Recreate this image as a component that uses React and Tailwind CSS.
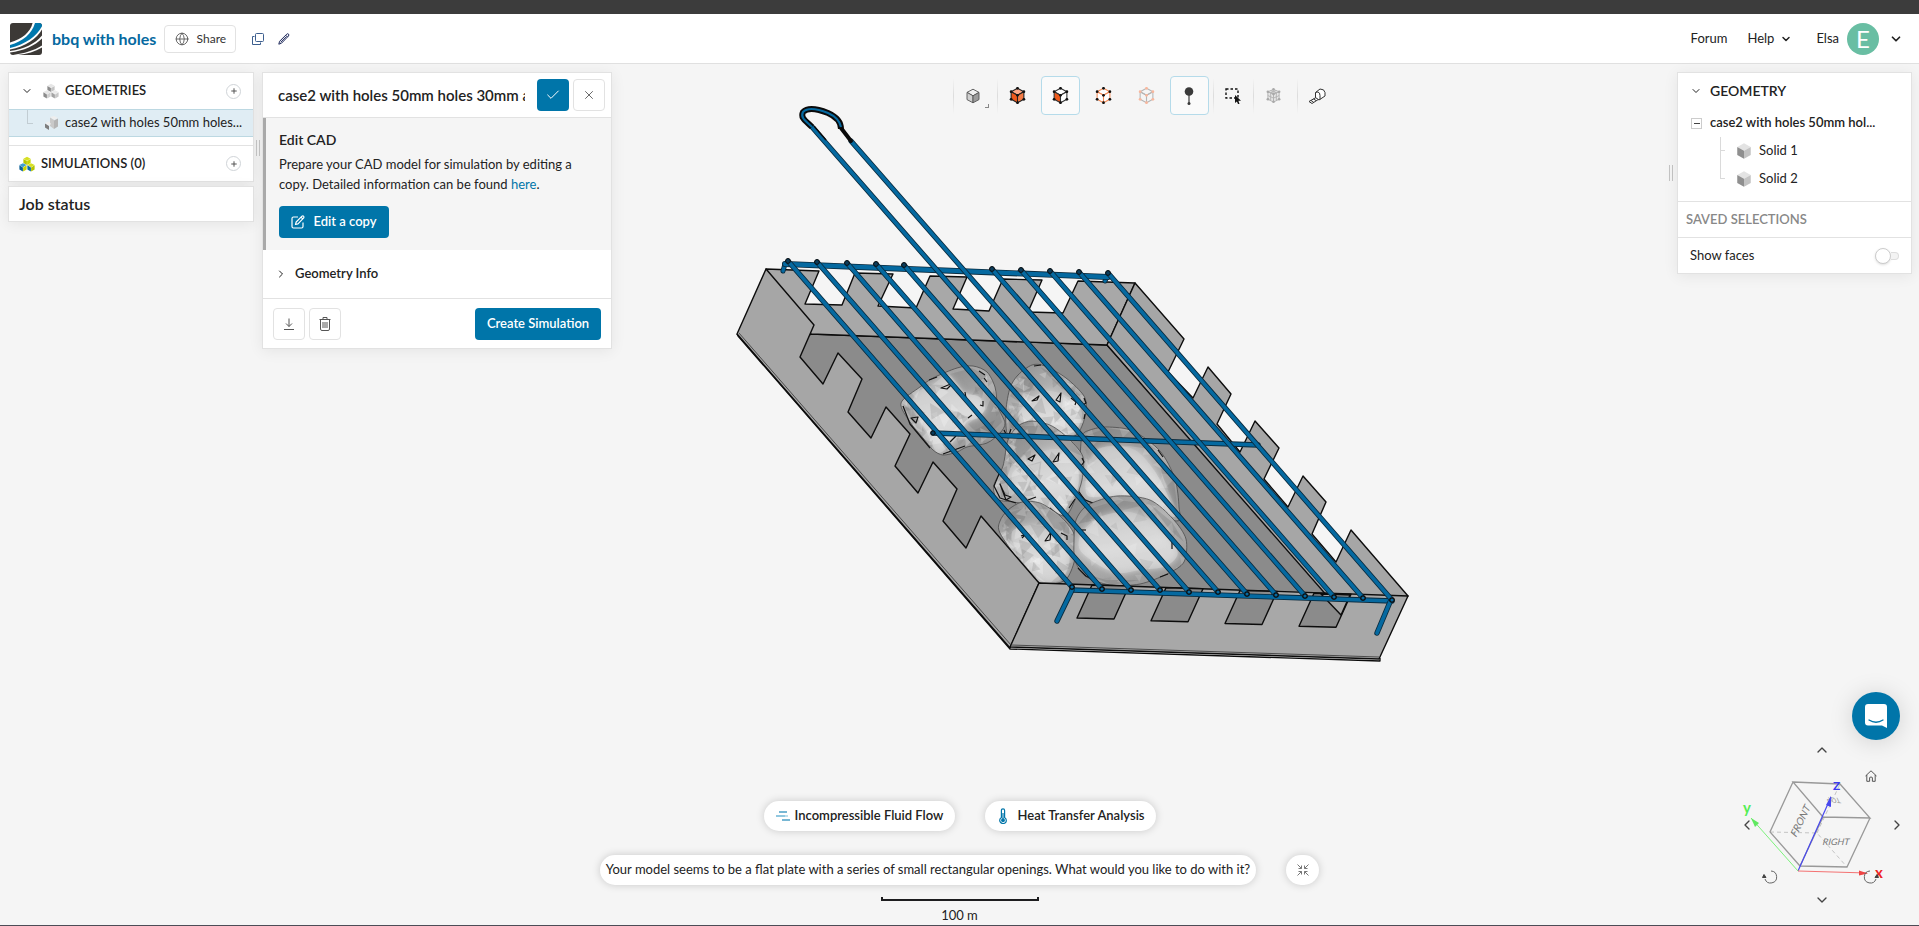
import React from "react";
import { Check, X, ChevronDown, ChevronRight, ChevronUp, ChevronLeft, Globe, Plus } from "lucide-react";

/* ---------- small isometric cube icons ---------- */

function Cube({ className, top = "#e3e3e3", left = "#8f8f8f", right = "#c3c3c3", stroke = "none", dots, strokeWidth = 1 }) {
  const pts = [[8, 1.2], [14, 4.4], [14, 11.6], [8, 14.8], [2, 11.6], [2, 4.4], [8, 7.8]];
  return (
    <svg viewBox="0 0 16 16" className={className} aria-hidden="true">
      <g stroke={stroke} strokeWidth={strokeWidth} strokeLinejoin="round">
        <path d="M8 1.2 14 4.4 8 7.8 2 4.4Z" fill={top} />
        <path d="M2 4.4 8 7.8V14.8L2 11.6Z" fill={left} />
        <path d="M14 4.4 8 7.8V14.8L14 11.6Z" fill={right} />
      </g>
      {dots && pts.map(([x, y]) => <circle key={`${x}-${y}`} cx={x} cy={y} r="1.3" fill={dots} />)}
    </svg>
  );
}

const grays = [["#e6e6e6", "#8c8c8c", "#c4c4c4"], ["#e6e6e6", "#8c8c8c", "#cfcfcf"], ["#ececec", "#a4a4a4", "#c8c8c8"]];
const brights = [["#d7e021", "#b4c400", "#c8d400"], ["#3c9fd0", "#0a5f96", "#c8d400"], ["#d7e021", "#0a6ba5", "#b4c400"]];

function Cluster({ className, colors }) {
  const at = [[4, 0], [0, 6.4], [8, 6.4]];
  return (
    <svg viewBox="0 0 16 16" className={className} aria-hidden="true">
      {at.map(([x, y], i) => (
        <g key={i} transform={`translate(${x} ${y})`}>
          <path d="M4 .8 7.6 2.7 4 4.8.4 2.7Z" fill={colors[i][0]} />
          <path d="M.4 2.9 3.9 5v4L.4 7Z" fill={colors[i][1]} />
          <path d="M7.6 2.9 4.1 5v4L7.6 7Z" fill={colors[i][2]} />
        </g>
      ))}
    </svg>
  );
}

function Logo() {
  return (
    <svg viewBox="0 0 32 32" className="size-8 shrink-0" aria-hidden="true">
      <rect width="32" height="32" rx="3" fill="#3c3936" />
      <path d="M24.5 0H29a3 3 0 0 1 3 3v.6C27.500 13.500 16 22 0 25.800V21.200C13 17.500 21.500 10.500 24.500 0Z" fill="#0078ad" />
      <path d="M22.600 0H25C21.800 11 13 18.300 0 22V19.600C12.400 15.800 20.200 9.400 22.600 0Z" fill="#fff" />
      <path d="M32 3.200V6.500C27 15.500 15.500 23.500 0 26.600V25C15.500 21.300 27 13 32 3.200Z" fill="#fff" />
      <path d="M32 12.500V15.600C25 22.800 14 27.800 0 29.600V28.100C14 25.900 25 21 32 12.500Z" fill="#fff" />
      <path d="M32 22.500V24.500C25 28.600 17 31 8 32H3C14 30.500 24 27.500 32 22.500Z" fill="#fff" />
    </svg>
  );
}

/* ---------- 3D model ---------- */

function smooth(points) {
  const n = points.length;
  let d = `M${points[0][0]} ${points[0][1]}`;
  for (let i = 0; i < n; i++) {
    const [a, b, c, e] = [points[(i - 1 + n) % n], points[i], points[(i + 1) % n], points[(i + 2) % n]];
    const k = 7;
    d += `C${b[0] + (c[0] - a[0]) / k} ${b[1] + (c[1] - a[1]) / k} ${c[0] - (e[0] - b[0]) / k} ${c[1] - (e[1] - b[1]) / k} ${c[0]} ${c[1]}`;
  }
  return d + "Z";
}

/* deterministic small triangles that give a surface its faceted look */
function facets(outline, seed, count) {
  let s = seed;
  const rnd = () => (s = (s * 16807) % 2147483647) / 2147483647;
  const xs = outline.map((p) => p[0]);
  const ys = outline.map((p) => p[1]);
  const [x0, x1, y0, y1] = [Math.min(...xs), Math.max(...xs), Math.min(...ys), Math.max(...ys)];
  return Array.from({ length: count }, () => {
    const x = x0 + rnd() * (x1 - x0);
    const y = y0 + rnd() * (y1 - y0);
    const r = 4 + rnd() * 7;
    const t = rnd() * 6.28;
    const pt = (a, k) => `${(x + Math.cos(t + a) * r * k).toFixed(1)} ${(y + Math.sin(t + a) * r * k).toFixed(1)}`;
    return { d: `M${pt(0, 1)} ${pt(2, 0.9)} ${pt(4.1, 0.7)}Z`, fill: rnd() > 0.45 ? "#ffffff" : "#777777" };
  });
}

const pieces = [
  {
    outline: [[901, 403], [920, 387], [933, 378], [957, 368], [973, 366], [987, 372], [995, 387], [998, 407], [1005, 423], [1000, 433], [987, 443], [967, 447], [957, 452], [943, 455], [933, 450], [923, 438], [910, 422]],
    lit: [[932, 385], [948, 375], [963, 393], [978, 396], [985, 408], [978, 418], [967, 422], [955, 440], [938, 453], [927, 432], [912, 407], [918, 392]],
    shades: ["M950 374l22-6 14 8-4 22-18-6z", "M968 424l18-14 8-20 8 32-18 18z", "M903 404l10 4 12 24-8-4z", "M975 430l20-10-8 18z"],
    marks: ["M941 388l12-5-6 6z", "M929 380l8-3 M979 371l6 4 M984 378l3 4", "M965 392l1 6", "M983 401v5l-3-1 M968 418l4-3", "M911 418l7-1-2 6z", "M903 406l7 18 20 24", "M950 442l6-6", "M943 454l22-8"],
  },
  {
    outline: [[1007, 433], [1006, 410], [1010, 388], [1018, 375], [1032, 365], [1045, 366], [1066, 378], [1084, 396], [1086, 412], [1080, 430], [1070, 438], [1040, 440], [1016, 436]],
    lit: [[1030, 400], [1045, 391], [1062, 394], [1078, 404], [1082, 416], [1076, 430], [1060, 436], [1040, 428], [1020, 420], [1020, 408]],
    shades: ["M1010 396l12-20 14 6-14 22z", "M1040 367l20 10 22 20-20-8z", "M1008 414l10-8 4 14-12 12z"],
    marks: ["M1032 401l7-5-2 4z", "M1056 400l5-7-1 9z", "M1071 398l5 4-1 3", "M1084 398l2 5-3 2", "M1085 414l-1 5", "M1034 366l7-1", "M1004 430l4 8 3-9"],
  },
  {
    outline: [[1082, 436], [1090, 430], [1107, 427], [1133, 431], [1160, 451], [1175, 479], [1179, 507], [1177, 521], [1137, 510], [1090, 502], [1078, 487], [1080, 460]],
    lit: [[1086, 478], [1092, 454], [1110, 446], [1135, 450], [1154, 470], [1168, 496], [1174, 517], [1137, 498], [1110, 496], [1088, 496]],
    shades: ["M1085 436l22-8 26 4 24 18-28-4-38 2z", "M1156 452l18 28 4 34-14-34z"],
    marks: ["M1158 450l5 7", "M1079 492l6 8 8 3"],
    smoothness: 10,
  },
  {
    outline: [[997, 499], [994, 485], [1003, 466], [1008, 440], [1018, 426], [1032, 421], [1052, 426], [1070, 440], [1083, 457], [1082, 480], [1075, 500], [1065, 516], [1045, 507], [1013, 502]],
    lit: [[1015, 470], [1042, 452], [1062, 450], [1077, 464], [1078, 487], [1068, 504], [1062, 515], [1040, 504], [1018, 492], [1012, 482]],
    shades: ["M1008 446l14-20 16 0-8 22-20 20z", "M1046 426l26 16 10 14-18-8z", "M999 470l8-4 2 28-8 4z"],
    marks: ["M1028 459l7-4-3 6z", "M1053 462l6-9-1 8z", "M1082 458l2 4-3 4", "M999 474l-5 12 6 12 16 5", "M1000 484l5 11 6 2-5 3z", "M1028 500l8-3", "M1069 508l6-9", "M1050 508l10 10"],
  },
  {
    outline: [[1000, 533], [1000, 521], [1008, 510], [1022, 502], [1040, 503], [1060, 516], [1074, 534], [1075, 558], [1068, 577], [1058, 583], [1040, 583], [1020, 562]],
    lit: [[1012, 532], [1036, 525], [1058, 537], [1069, 552], [1068, 568], [1060, 580], [1042, 581], [1020, 558]],
    shades: ["M1002 526l10-14 18-6-6 14-14 14z", "M1040 504l22 14 12 18-20-8z"],
    marks: ["M1021 536l5-2-4 4", "M1045 541l6-9-1 8z", "M1061 533l6 3 0 4", "M1075 535v6 M1075 551v6"],
  },
  {
    outline: [[1074, 540], [1076, 520], [1088, 505], [1117, 496], [1150, 500], [1173, 519], [1186, 539], [1184, 562], [1167, 574], [1140, 584], [1110, 585], [1085, 576], [1075, 560]],
    lit: [[1082, 532], [1102, 516], [1130, 512], [1156, 524], [1176, 548], [1176, 558], [1164, 567], [1140, 570], [1120, 573], [1100, 566], [1080, 550]],
    shades: ["M1078 524l14-16 26-8 30 4-24 6-30 10z", "M1150 504l22 18 12 20-14-12z", "M1086 574l20 6 34 0-28 5z"],
    marks: ["M1172 542v7", "M1078 568l8 8 6 3", "M1080 530h6", "M1160 577l8-3"],
    smoothness: 12,
  },
];

const floorY = (x) => 585 + (x - 1092) * 0.037;

const bars = [
  [788, 261, 1072, 587], [817, 262, 1102, 589], [847, 263, 1131, 590], [876, 264, 1160, 590],
  [904, 265, 1189, 592], [812, 127, 1218, 592], [851, 141, 1247, 594], [992, 269, 1276, 595],
  [1021, 270, 1305, 596], [1050, 271, 1334, 597], [1079, 272, 1363, 598], [1108, 273, 1392, 600],
];

function Rod({ d, w = 5 }) {
  return (
    <g fill="none" strokeLinecap="round" strokeLinejoin="round">
      <path d={d} stroke="#0a2a3d" strokeWidth={w} />
      <path d={d} stroke="#0569a0" strokeWidth={w - 1.7} />
    </g>
  );
}

function Model() {
  return (
    <svg viewBox="0 64 1919 861" preserveAspectRatio="xMidYMid meet" className="absolute inset-0 h-full w-full" role="img" aria-label="Barbecue model with grill">
      <defs>
        <linearGradient id="dark" x1="0" y1="0" x2="0.6" y2="1">
          <stop offset="0" stopColor="#8c8c8c" />
          <stop offset="0.5" stopColor="#b4b4b4" />
          <stop offset="1" stopColor="#999999" />
        </linearGradient>
        <linearGradient id="light" x1="0.2" y1="0" x2="0.5" y2="1">
          <stop offset="0" stopColor="#c8c8c8" />
          <stop offset="0.6" stopColor="#dcdcdc" />
          <stop offset="1" stopColor="#d2d2d2" />
        </linearGradient>
        <filter id="blend" x="-20%" y="-20%" width="140%" height="140%"><feGaussianBlur stdDeviation="3" /></filter>
        <filter id="soften"><feGaussianBlur stdDeviation="0.7" /></filter>
        {pieces.map((p, i) => <clipPath key={i} id={`piece${i}`}><path d={smooth(p.outline)} /></clipPath>)}
      </defs>

      <g stroke="#0c0c0c" strokeWidth="1.4" strokeLinejoin="round">
        <path d="M811 334 1107 345 1350 615 1039 590 960 560 790 350Z" fill="#8b8b8b" />
        <path d="M766 269 819 271 805 304 842 305 855 273 893 274 878 306 916 308 930 276 967 277 953 309 989 311 1003 279 1042 280 1028 312 1063 313 1078 281 1135 283 1107 345 811 334Z" fill="#a8a8a8" />
        <path d="M1135 283 1184 339 1168 372 1193 398 1208 367 1231 394 1217 424 1240 452 1255 421 1279 448 1264 479 1288 507 1303 476 1326 502 1312 534 1336 562 1351 530 1408 596 1350 622 1107 345Z" fill="#a6a6a6" />
      </g>

      {pieces.map((p, i) => (
        <g key={i} strokeLinejoin="round">
          <g clipPath={`url(#piece${i})`}>
            <path d={smooth(p.outline)} fill="url(#dark)" />
            {p.shades.map((d) => <path key={d} d={d} fill="#666" opacity="0.25" filter="url(#soften)" />)}
            <path d={smooth(p.lit)} fill="url(#light)" filter="url(#blend)" />
            <path d={smooth(p.lit)} fill="url(#light)" opacity="0.6" filter="url(#soften)" />
            <g filter="url(#soften)">
              {facets(p.outline, 41 + i * 97, p.smoothness ? 26 : 60).map((f) => (
                <path key={f.d} d={f.d} fill={f.fill} opacity={p.smoothness ? 0.14 : 0.22} />
              ))}
            </g>
          </g>
          <path d={smooth(p.outline)} fill="none" stroke="#4e4e4e" strokeWidth="0.8" />
          {p.marks.map((d) => <path key={d} d={d} fill="none" stroke="#111" strokeWidth="1.2" />)}
        </g>
      ))}

      <g stroke="#0c0c0c" strokeWidth="1.4" strokeLinejoin="round">
        <path d="M766 269 737 334 1010 648 1039 583 981 516 966 548 943 521 957 489 933 462 918 493 895 466 910 434 886 407 871 438 848 412 862 379 838 353 823 384 800 357 814 325Z" fill="#a6a6a6" />
        <path d="M1039 583 1408 596 1379 659 1010 647Z" fill="#a8a8a8" />
        <path d="M737 334 738 336 1010 649 1380 661 1380 658" fill="none" strokeWidth="1.3" />
        <path d="M739 333 1011 645 1379 657" fill="none" stroke="#333" strokeWidth="0.8" />
        {[1092, 1166, 1240, 1314].map((x) => (
          <path key={x} d={`M${x} ${floorY(x)}l-15 33 37 1 15-33Z`} fill="#8b8b8b" />
        ))}
        <path d="M1321 594 1341 615 1350 595Z" fill="#a6a6a6" />
      </g>

      <Rod d="M785 264 783 271" />
      <Rod d="M1107 276 1105 281" />
      <Rod d="M785 264 1108 277" w={6} />
      <Rod d="M933 433 1258 445" w={5.4} />
      <Rod d="M1072 590 1392 601" w={5.4} />
      <Rod d="M1072 590 1057 621" w={5.4} />
      <Rod d="M1390 602 1377 633" w={5.4} />
      {bars.map(([x1, y1, x2, y2]) => (
        <g key={x2}>
          <Rod d={`M${x1} ${y1} ${x2} ${y2}`} w={5.2} />
          <circle cx={x2} cy={y2} r="2.200" fill="#0569a0" stroke="#0c0c0c" strokeWidth="1.200" />
          {y1 > 200 && <circle cx={x1} cy={y1} r="2.400" fill="#0b3d5c" stroke="#0c0c0c" strokeWidth="1" />}
        </g>
      ))}
      <circle cx="933" cy="433" r="2.200" fill="#0b3d5c" stroke="#0c0c0c" />
      <path d="M812 127C806 121 800 118 803 112 808 107 818 109 828 113 837 117 841 123 841 129" fill="none" stroke="#0a0a0a" strokeWidth="6" strokeLinejoin="round" />
      <path d="M841 128 851 141" fill="none" stroke="#0a0a0a" strokeWidth="4" strokeLinecap="round" />
      <path d="M812 127C806 121 800 118 803 112 808 107 818 109 828 113 837 117 840 122 841 127" fill="none" stroke="#0569a0" strokeWidth="2.200" />
      <path d="M814 126 826 140" stroke="#0a0a0a" strokeWidth="1.500" />
    </svg>
  );
}

/* ---------- header ---------- */

function Header() {
  return (
    <header className="flex h-[50px] items-center border-b border-[#e0e0e0] bg-white pr-4 pl-2.5">
      <Logo />
      <h1 className="ml-2.5 text-base font-bold text-[#0569a0]">bbq with holes</h1>
      <button type="button" className="ml-2 flex h-7 w-18 items-center justify-center gap-2 rounded border border-[#e2e2e2] text-xs text-[#333]">
        <Globe className="size-3.5 text-[#555]" strokeWidth={1.5} />
        Share
      </button>
      <button type="button" aria-label="Duplicate project" className="ml-4 text-[#3d5f8f]">
        <svg viewBox="0 0 12 12" className="size-3" fill="none" stroke="currentColor"><rect x="3.500" y=".5" width="8" height="8" rx="1" /><path d="M2.500 3.500H.5v8h8V9.500" /></svg>
      </button>
      <button type="button" aria-label="Rename project" className="ml-3.5 text-[#1f2a5c]">
        <svg viewBox="0 0 12 12" className="size-3" fill="none" stroke="currentColor" strokeLinejoin="round"><path d="M.8 11.200 1.600 8.300 8.800 1.100q1-.8 1.700 0t0 1.900L3.500 10.200ZM7.700 2.200 9.600 4.100M2.600 9.300 8.300 3.600" /></svg>
      </button>
      <nav className="ml-auto flex items-center text-[13px] text-[#222]">
        <a href="#forum">Forum</a>
        <button type="button" className="ml-5 flex items-center gap-1.5">Help <ChevronDown className="size-3" strokeWidth={3} /></button>
        <button type="button" className="ml-6 flex items-center gap-2">
          <span>Elsa</span>
          <span className="flex size-8 items-center justify-center rounded-full bg-[#69bea3] text-2xl text-white">E</span>
          <ChevronDown className="ml-0.5 size-3.5" strokeWidth={3} />
        </button>
      </nav>
    </header>
  );
}

/* ---------- left tree ---------- */

const card = "border border-[#e2e2e2] bg-white shadow-[0_2px_14px_rgba(0,0,0,0.07)]";

function AddButton({ label }) {
  return (
    <button type="button" aria-label={label} className="ml-auto flex size-[15px] items-center justify-center rounded-full border border-[#d0d4d8] bg-white text-[#555]">
      <Plus className="size-2" strokeWidth={3} />
    </button>
  );
}

function Grip() {
  return <div className="h-4 w-1 border-x border-[#c4c4c4]" />;
}

function Tree() {
  return (
    <aside className="flex w-[246px] shrink-0 flex-col gap-1 text-[13px] text-[#222]">
      <div className={card}>
        <div className="flex h-9 items-center pr-3 pl-3">
          <ChevronDown className="size-3" strokeWidth={2} />
          <Cluster className="ml-2.5 size-4" colors={grays} />
          <span className="ml-1.5 font-semibold">GEOMETRIES</span>
          <AddButton label="Add geometry" />
        </div>
        <div className="flex h-7 items-center border-y border-[#bcd8e2] bg-[#e0edf4] pl-[18px]">
          <span className="-mt-3 h-3.5 w-1.5 shrink-0 border-b border-l border-[#c2cdd3]" />
          <svg viewBox="0 0 14 14" className="ml-3 size-3.5 shrink-0" aria-hidden="true">
            <path d="M5 1 9 0 13 2 9 4Z" fill="#eee" /><path d="M5 1.500 9 4V13L5 10Z" fill="#c9c9c9" /><path d="M13 2.500 9 4.500V13L13 10.500Z" fill="#b5b5b5" /><path d="M0 7.500 4 10V14L0 11.500Z" fill="#7e7e7e" /><path d="M0 7 4 5.500 6 8 4 9.500Z" fill="#eee" />
          </svg>
          <span className="ml-1.5 whitespace-nowrap">case2 with holes 50mm holes...</span>
        </div>
        <div className="mt-2 flex h-9 items-center border-t border-[#e2e2e2] pr-3 pl-2.5">
          <Cluster className="size-4" colors={brights} />
          <span className="ml-1.5 font-semibold">SIMULATIONS (0)</span>
          <AddButton label="Add simulation" />
        </div>
      </div>
      <h2 className={`${card} flex h-9 items-center pl-2.5 text-base font-semibold`}>Job status</h2>
    </aside>
  );
}

/* ---------- geometry settings ---------- */

const ghost = "flex size-8 items-center justify-center rounded border border-[#e2e2e2] bg-white text-[#555]";
const primary = "flex h-8 items-center justify-center rounded bg-[#0075a9] text-[13px] font-semibold text-white";

function Settings() {
  return (
    <section className={`${card} w-[350px] shrink-0 text-[13px] text-[#222]`}>
      <div className="flex h-[45px] items-center gap-1 border-b border-[#e2e2e2] pr-1.5 pl-[15px]">
        <input aria-label="Geometry name" defaultValue="case2 with holes 50mm holes 30mm and grill" className="mr-2 min-w-0 flex-1 text-[15px] font-semibold outline-none" />
        <button type="button" aria-label="Confirm" className={`${primary} w-8`}><Check className="size-4" strokeWidth={1.5} /></button>
        <button type="button" aria-label="Close" className={ghost}><X className="size-3.5" strokeWidth={1.5} /></button>
      </div>
      <div className="border-l-3 border-[#a9a9a9] bg-[#f5f5f5] py-3 pl-[13px]">
        <h3 className="text-sm font-semibold">Edit CAD</h3>
        <p className="mt-1 pr-9 leading-5">
          Prepare your CAD model for simulation by editing a copy. Detailed information can be found <a href="#docs" className="text-[#0075a9]">here</a>.
        </p>
        <button type="button" className={`${primary} mt-3 w-[110px] gap-2`}>
          <svg viewBox="0 0 14 14" className="size-3.5" fill="none" stroke="currentColor" strokeWidth="1.200" strokeLinejoin="round"><path d="M7 2H2.500Q1 2 1 3.500V11.500Q1 13 2.500 13H10.500Q12 13 12 11.500V7.500" /><path d="M4.500 9.500 5.200 7 11 1.200q.8-.7 1.500 0t.2 1.700L7 8.800ZM10 2.200 11.700 3.900" /></svg>
          Edit a copy
        </button>
      </div>
      <button type="button" className="flex h-12 w-full items-center gap-2 pl-3 text-left font-semibold">
        <ChevronRight className="size-3" strokeWidth={2} />
        Geometry Info
      </button>
      <div className="flex h-[50px] items-center gap-1 border-t border-[#e2e2e2] px-2.5">
        <button type="button" aria-label="Download" className={ghost}>
          <svg viewBox="0 0 12 12" className="size-3" fill="none" stroke="currentColor"><path d="M6 .5V8.500M3 5.500 6 8.500 9 5.500M1 11.500H11" /></svg>
        </button>
        <button type="button" aria-label="Delete" className={ghost}>
          <svg viewBox="0 0 12 14" className="h-3.5 w-3" fill="none" stroke="currentColor"><path d="M.5 2.500H11.500M4 2.500V.500H8V2.500M1.500 2.500V12Q1.500 13.500 3 13.500H9Q10.500 13.500 10.500 12V2.500M4 5V11M6 5V11M8 5V11" /></svg>
        </button>
        <button type="button" className={`${primary} ml-auto w-[126px]`}>Create Simulation</button>
      </div>
    </section>
  );
}

/* ---------- viewer toolbar ---------- */

const tool = "flex size-[39px] items-center justify-center rounded";
const toolOn = "flex size-[39px] items-center justify-center rounded border border-[#b5dbea] bg-[#fafafa]";

function Divider() {
  return <span className="h-9 w-px bg-linear-to-b from-transparent via-[#dcdcdc] to-transparent" />;
}

function Toolbar() {
  return (
    <div role="toolbar" aria-label="Viewer" className="flex flex-1 items-center justify-center pt-1 pl-2.5">
      <Divider />
      <button type="button" aria-label="Rendering" className={`${tool} mr-1`}>
        <Cube className="ml-2 size-4" top="#f0f0f0" left="#d0d0d0" right="#9b9b9b" stroke="#555" strokeWidth={0.9} />
        <span className="mt-5 ml-1 size-1 border-r border-b border-[#888]" />
      </button>
      <Divider />
      <div className="flex gap-1">
        <button type="button" aria-label="Select volumes" className={tool}><Cube className="size-[17px]" top="#ffa988" left="#ee5a1c" right="#f47b45" stroke="#222" dots="#111" /></button>
        <button type="button" aria-label="Select faces" className={toolOn}><Cube className="size-[17px]" top="#fff" left="#ee5a1c" right="#fff" stroke="#333" dots="#111" /></button>
        <button type="button" aria-label="Select edges" className={tool}><Cube className="size-[17px]" top="#fff" left="#fff" right="#fff" stroke="#f58a55" dots="#111" /></button>
        <button type="button" aria-label="Select vertices" className={tool}><Cube className="size-[17px]" top="none" left="none" right="none" stroke="#b5b5b5" dots="#f9b79d" /></button>
        <button type="button" aria-label="Probe point" className={toolOn}>
          <svg viewBox="0 0 10 18" className="h-[18px] w-2.5"><circle cx="5" cy="4.500" r="4.300" fill="#3a3a3a" /><path d="M5 8V17" stroke="#3a3a3a" strokeWidth="1.200" /><circle cx="5" cy="16.500" r="1.500" fill="#3a3a3a" /></svg>
        </button>
      </div>
      <span className="w-1" />
      <Divider />
      <button type="button" aria-label="Box selection" className={tool}>
        <svg viewBox="0 0 16 16" className="size-4"><path d="M1 1H13V10H1Z" fill="none" stroke="#111" strokeWidth="1.400" strokeDasharray="2.500 2" /><path d="M10 7V15L11.900 13.400 13 16H14.500L13.400 12.800H16Z" fill="#111" /></svg>
      </button>
      <Divider />
      <button type="button" aria-label="Mesh selection" className={`${tool} mr-1`}>
        <svg viewBox="0 0 16 16" className="size-[15px]" fill="#e6e6e6" stroke="#b3b3b3"><path d="M8 1.500 14 4 8 6.500 2 4ZM2 4V12L8 15V6.500ZM14 4V12L8 15V6.500ZM5 2.800 11 5.200V13.500M11 2.800 5 5.200V13.500M2 8 8 10.800 14 8" /><g fill="#a9a9a9" stroke="none"><circle cx="8" cy="1.500" r="1.400" /><circle cx="2" cy="4" r="1.400" /><circle cx="14" cy="4" r="1.400" /><circle cx="2" cy="12" r="1.400" /><circle cx="14" cy="12" r="1.400" /><circle cx="8" cy="14.600" r="1.400" /><circle cx="8" cy="6.500" r="1.400" /></g></svg>
      </button>
      <Divider />
      <button type="button" aria-label="Measure" className={tool}>
        <svg viewBox="0 0 18 16" className="h-4 w-[18px]" fill="#fff" stroke="#333" strokeLinejoin="round"><path d="M1 13.500 8 9.500 11 11 4 15.500Z" /><path d="M7.500 9.500V4.500L12 1Q16.500 1 17 4.500V8L11 12Z" /><path d="M7.500 9.500V5.500Q8 3.500 10 4T12 7.500V11.500" fill="none" /><path d="M3 12.500 5.500 14M5.500 11 8 12.500" /></svg>
      </button>
    </div>
  );
}

/* ---------- scene tree ---------- */

function SceneTree() {
  return (
    <aside className={`${card} w-[235px] shrink-0 text-[13px] text-[#222]`}>
      <div className="flex h-9 items-center gap-2 pl-3"><ChevronDown className="size-3" strokeWidth={2} /><span className="text-sm font-semibold">GEOMETRY</span></div>
      <div className="flex h-7 items-center gap-2 pl-[13px]">
        <button type="button" aria-label="Collapse" className="flex size-[11px] items-center justify-center border border-[#ccc]"><span className="h-px w-1.5 bg-[#444]" /></button>
        <span className="font-semibold whitespace-nowrap">case2 with holes 50mm hol...</span>
      </div>
      <ul className="ml-[42px] pb-2">
        {["Solid 1", "Solid 2"].map((name, i) => (
          <li key={name} className="flex h-7 items-center">
            <span className="flex h-7 w-[5px] flex-col">
              <span className="h-3.5 border-b border-l border-[#dadada]" />
              {i === 0 && <span className="h-3.5 border-l border-[#dadada]" />}
            </span>
            <Cube className="ml-2.5 size-[18px]" />
            <span className="ml-1.5">{name}</span>
          </li>
        ))}
      </ul>
      <div className="flex h-9 items-center border-t border-[#e2e2e2] pl-2 font-semibold text-[#888]">SAVED SELECTIONS</div>
      <label className="flex h-9 items-center border-t border-[#e2e2e2] pr-3 pl-3">
        Show faces
        <input type="checkbox" role="switch" className="peer sr-only" />
        <span className="ml-auto flex items-center">
          <span className="size-4 rounded-full border border-[#ccc] bg-white shadow-sm" />
          <span className="h-2 w-2 rounded-r-full border border-l-0 border-[#ddd] bg-[#f3f3f3]" />
        </span>
      </label>
    </aside>
  );
}

/* ---------- orientation cube ---------- */

const navButton = "absolute flex size-4 items-center justify-center text-[#444]";

function Orientation() {
  return (
    <div className="absolute right-[15px] bottom-[13px] h-[172px] w-[164px]">
      <svg viewBox="1740 740 164 172" className="absolute inset-0 h-full w-full" fill="none" fontFamily="Lato, sans-serif" aria-hidden="true">
        <g stroke="#c4c4c4" strokeDasharray="4 3"><path d="M1770 832 1817 833 1847 867M1817 833 1840 784" /></g>
        <g stroke="#999" strokeWidth="1.300"><path d="M1793 782 1840 784 1870 818 1823 817ZM1793 782 1770 832 1800 866 1847 867 1870 818M1823 817 1800 866" /></g>
        <g fill="#777" stroke="none">
          <text transform="translate(1796 838) rotate(-64) skewX(-14)" fontSize="10">FRONT</text>
          <text transform="translate(1822 845) skewX(-14)" fontSize="9">RIGHT</text>
          <text transform="translate(1839 798) rotate(185) skewX(30)" fontSize="7" fill="#999">TOP</text>
        </g>
        <path d="M1798 871 1831 797" stroke="#4848ee" strokeWidth="1.200" /><path d="M1831 796 1826 805 1831 807Z" fill="#4848ee" />
        <path d="M1798 871 1751 818" stroke="#7cf27c" /><path d="M1751 818 1759 823 1755 827Z" fill="#5fe85f" />
        <path d="M1798 871 1867 873" stroke="#f47272" /><path d="M1868 873.500 1859 870.500V875.500Z" fill="#ee4444" />
        <text x="1833" y="790" fontSize="12" fontWeight="700" fill="#3a3aee">Z</text>
        <text x="1743" y="813" fontSize="15" fontWeight="700" fill="#55ee55">y</text>
        <text x="1875" y="878" fontSize="15" fontWeight="700" fill="#ee2222">x</text>
      </svg>
      <button type="button" aria-label="Rotate up" className={`${navButton} top-0.5 left-[74px]`}><ChevronUp className="size-4" strokeWidth={2} /></button>
      <button type="button" aria-label="Rotate left" className={`${navButton} top-[77px] -left-px`}><ChevronLeft className="size-4" strokeWidth={2} /></button>
      <button type="button" aria-label="Rotate right" className={`${navButton} top-[77px] left-[149px]`}><ChevronRight className="size-4" strokeWidth={2} /></button>
      <button type="button" aria-label="Rotate down" className={`${navButton} top-[152px] left-[74px]`}><ChevronDown className="size-4" strokeWidth={2} /></button>
      <button type="button" aria-label="Home view" className={`${navButton} top-7 left-[123px]`}>
        <svg viewBox="0 0 12 12" className="size-3" fill="none" stroke="currentColor" strokeWidth=".9"><path d="M.5 6 6 .8 11.500 6M1.800 5V11.300H4.600V7.600Q6 6.300 7.400 7.600V11.300H10.200V5" /></svg>
      </button>
      <button type="button" aria-label="Roll counterclockwise" className={`${navButton} top-[129px] left-[22px]`}>
        <svg viewBox="0 0 16 16" className="size-4" fill="none" stroke="#666"><path d="M3 10A6 6 0 1 0 9 2" /><path d="M.5 8.500 2 5.500 4 8.500Z" fill="#444" stroke="#444" /></svg>
      </button>
      <button type="button" aria-label="Roll clockwise" className={`${navButton} top-[129px] left-[123px]`}>
        <svg viewBox="0 0 16 16" className="size-4" fill="none" stroke="#666"><path d="M13 10A6 6 0 1 1 7 2" /><path d="M12 8.500 14 5.500 15.500 8.500Z" fill="#444" stroke="#444" /></svg>
      </button>
    </div>
  );
}

/* ---------- assistant ---------- */

const pill = "flex h-[30px] items-center rounded-full bg-white text-[13px] text-[#222] shadow-[0_0_8px_rgba(0,0,0,0.18)]";

function Assistant() {
  return (
    <div className="relative mt-auto flex flex-col items-center">
      <div className="flex gap-[30px]">
        <button type="button" className={`${pill} w-[191px] justify-center gap-1 font-semibold`}>
          <svg viewBox="0 0 16 10" className="h-2.5 w-4" strokeWidth="1.500"><path d="M4 1H12" stroke="#4a9fc6" /><path d="M1 5H10" stroke="#6db6d6" /><path d="M7 9H15" stroke="#4a9fc6" /><path d="M10 5H13" stroke="#a8d4e6" /></svg>
          Incompressible Fluid Flow
        </button>
        <button type="button" className={`${pill} w-[171px] justify-center gap-2.5 pl-1 font-semibold`}>
          <svg viewBox="0 0 8 16" className="h-4 w-2" fill="#fff" stroke="#0075a9" strokeWidth="1.200"><path d="M2.400 9.500V2.500Q2.400.8 4 .8T5.600 2.500V9.500Q7.300 10.500 7.300 12.200A3.200 3.200 0 0 1 .7 12.200Q.7 10.500 2.400 9.500Z" /><circle cx="4" cy="12.200" r="1.300" fill="#0075a9" /><path d="M4 5V12" /></svg>
          Heat Transfer Analysis
        </button>
      </div>
      <div className="mt-6 flex gap-[30px]">
        <p className={`${pill} px-1.5`}>Your model seems to be a flat plate with a series of small rectangular openings. What would you like to do with it?</p>
        <button type="button" aria-label="Collapse assistant" className={`${pill} w-[33px] justify-center`}>
          <svg viewBox="0 0 12 12" className="size-3" fill="none" stroke="#777"><path d="M.5.500 4.500 4.500M1.500 4.500H4.500V1.500M11.500.5 7.500 4.500M10.500 4.500H7.500V1.500M.5 11.500 4.500 7.500M1.500 7.500H4.500V10.500M11.500 11.500 7.500 7.500M10.500 7.500H7.500V10.500" /></svg>
        </button>
      </div>
      <div className="mt-3 h-1 w-[158px] border-x-2 border-b-2 border-[#1d1d1f]" />
      <div className="mt-1 text-[13px] leading-5 text-[#222]">100 m</div>
    </div>
  );
}

export default function App() {
  return (
    <div className="flex min-h-screen flex-col bg-[#f5f5f5] font-['Lato',sans-serif] text-[#222]">
      <div className="h-3.5 bg-[#3c3c3c]" />
      <Header />
      <main className="relative flex flex-1 flex-col border-b border-[#4c4c56]">
        <Model />
        <div className="relative flex items-start pt-2 pr-[7px] pl-2">
          <Tree />
          <div className="mt-[68px] flex w-2 shrink-0 justify-center"><Grip /></div>
          <Settings />
          <Toolbar />
          <div className="mt-[93px] mr-0.5 flex w-2 shrink-0 justify-center"><Grip /></div>
          <SceneTree />
        </div>
        <Assistant />
        <Orientation />
        <button type="button" aria-label="Open chat" className="absolute right-[19px] bottom-[185px] flex size-12 items-center justify-center rounded-full bg-[#0075a9] shadow-[0_2px_24px_rgba(0,0,0,0.15)]">
          <svg viewBox="0 0 22 24" className="h-6 w-[22px]"><path d="M3 0H19Q22 0 22 3V24L17 21.500H3Q0 21.500 0 18.500V3Q0 0 3 0Z" fill="#fff" /><path d="M4 16Q11 20.500 18 16" fill="none" stroke="#0075a9" strokeWidth="1.300" strokeLinecap="round" /></svg>
        </button>
      </main>
    </div>
  );
}
